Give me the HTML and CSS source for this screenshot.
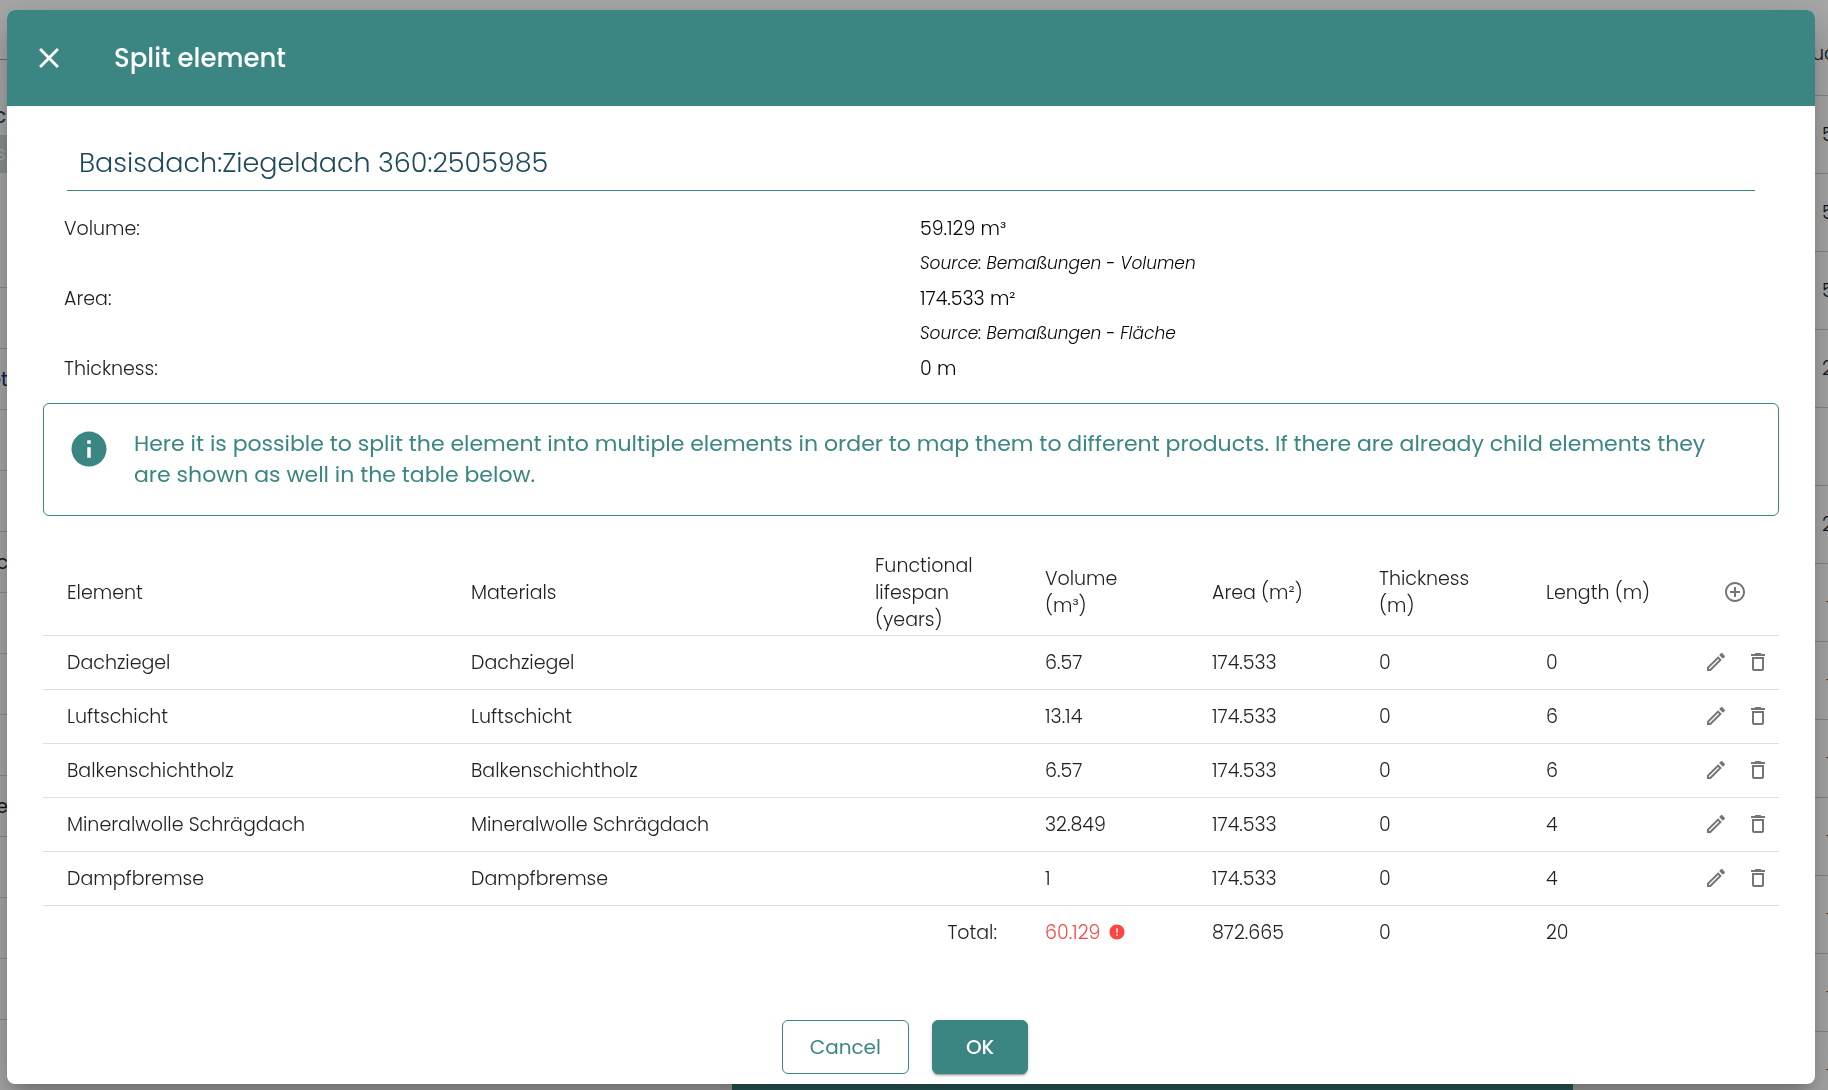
FILE: index.html
```html
<!DOCTYPE html>
<html lang="en">
<head>
<meta charset="utf-8">
<title>Split element</title>
<link rel="stylesheet" href="styles.css">
</head>
<body>
<svg class="sprite" aria-hidden="true">
  <symbol id="i-edit" viewBox="0 0 24 24"><path d="M14.06 9.02l.92.92L5.92 19H5v-.92l9.06-9.06M17.66 3c-.25 0-.51.1-.7.29l-1.83 1.83 3.75 3.75 1.83-1.83c.39-.39.39-1.02 0-1.41l-2.34-2.34c-.2-.2-.45-.29-.71-.29zm-3.6 3.19L3 17.25V21h3.75L17.81 9.94l-3.75-3.75z"/></symbol>
  <symbol id="i-delete" viewBox="0 0 24 24"><path d="M14.500 3h-5l-1 1H5v2h14V4h-3.500zM6 7v12c0 1.100.9 2 2 2h8c1.100 0 2-.9 2-2V7zM8 9h8v10H8z" fill-rule="evenodd"/></symbol>
  <symbol id="i-add" viewBox="0 0 24 24"><path d="M13 7h-2v4H7v2h4v4h2v-4h4v-2h-4V7zm-1-5C6.480 2 2 6.480 2 12s4.480 10 10 10 10-4.480 10-10S17.520 2 12 2zm0 18c-4.410 0-8-3.590-8-8s3.590-8 8-8 8 3.590 8 8-3.590 8-8 8z"/></symbol>
  <symbol id="i-close" viewBox="0 0 24 24"><path d="M19 6.410L17.590 5 12 10.590 6.410 5 5 6.410 10.590 12 5 17.590 6.410 19 12 13.410 17.590 19 19 17.590 13.410 12z"/></symbol>
  <symbol id="i-info" viewBox="0 0 24 24"><path d="M12 2C6.480 2 2 6.480 2 12s4.480 10 10 10 10-4.480 10-10S17.520 2 12 2zm1 15h-2v-6h2v6zm0-8h-2V7h2v2z"/></symbol>
  <symbol id="i-error" viewBox="0 0 24 24"><path d="M12 2C6.480 2 2 6.480 2 12s4.480 10 10 10 10-4.480 10-10S17.520 2 12 2zm1 15h-2v-2h2v2zm0-4h-2V7h2v6z"/></symbol>
</svg>

<div class="page" aria-hidden="true">
  <div class="tree">
    <div class="tree-top"></div>
    <div class="tree-head"><span class="tree-label">c</span><span class="tree-chip">s</span></div>
    <div class="tree-row"></div>
    <div class="tree-row"></div>
    <div class="tree-row link">et</div>
    <div class="tree-row"></div>
    <div class="tree-row"></div>
    <div class="tree-row">c</div>
    <div class="tree-row"></div>
    <div class="tree-row"></div>
    <div class="tree-row"></div>
    <div class="tree-row">e</div>
    <div class="tree-row"></div>
    <div class="tree-row"></div>
    <div class="tree-row"></div>
  </div>
  <div class="bottom-bar"></div>
  <div class="list">
    <div class="list-head">uct</div>
    <div class="list-row">5</div>
    <div class="list-row">5</div>
    <div class="list-row">5</div>
    <div class="list-row">2</div>
    <div class="list-row"></div>
    <div class="list-row">2</div>
    <div class="list-row dash">-</div>
    <div class="list-row dash">-</div>
    <div class="list-row dash">-</div>
    <div class="list-row dash">-</div>
    <div class="list-row dash">-</div>
    <div class="list-row dash">-</div>
    <div class="list-row dash">-</div>
  </div>
</div>

<div class="backdrop">
  <div class="dialog" role="dialog" aria-labelledby="dialog-title">
    <header class="dialog-head">
      <button class="icon-button close" type="button" aria-label="Close"><svg><use href="#i-close"/></svg></button>
      <h1 class="dialog-title" id="dialog-title">Split element</h1>
    </header>
    <main class="dialog-body">
      <h2 class="element-name">Basisdach:Ziegeldach 360:2505985</h2>
      <dl class="facts">
        <dt>Volume:</dt><dd>59.129 m³</dd>
        <dd class="source">Source: Bemaßungen - Volumen</dd>
        <dt>Area:</dt><dd>174.533 m²</dd>
        <dd class="source">Source: Bemaßungen - Fläche</dd>
        <dt>Thickness:</dt><dd>0 m</dd>
      </dl>
      <div class="notice">
        <svg class="notice-icon"><use href="#i-info"/></svg>
        <p class="notice-text">Here it is possible to split the element into multiple elements in order to map them to different products. If there are already child elements they are shown as well in the table below.</p>
      </div>
      <table class="parts">
        <colgroup>
          <col class="c-name"><col class="c-name"><col class="c-life"><col class="c-num"><col class="c-num"><col class="c-num"><col class="c-length"><col class="c-act">
        </colgroup>
        <thead>
          <tr>
            <th>Element</th><th>Materials</th><th>Functional<br>lifespan<br>(years)</th><th>Volume<br>(m³)</th><th>Area (m²)</th><th>Thickness<br>(m)</th><th>Length (m)</th>
            <th class="act"><div class="actions center"><button class="icon-button" type="button" aria-label="Add element"><svg><use href="#i-add"/></svg></button></div></th>
          </tr>
        </thead>
        <tbody>
          <tr><td>Dachziegel</td><td>Dachziegel</td><td></td><td>6.57</td><td>174.533</td><td>0</td><td>0</td><td class="act"><div class="actions"><button class="icon-button" type="button" aria-label="Edit"><svg><use href="#i-edit"/></svg></button><button class="icon-button" type="button" aria-label="Delete"><svg><use href="#i-delete"/></svg></button></div></td></tr>
          <tr><td>Luftschicht</td><td>Luftschicht</td><td></td><td>13.14</td><td>174.533</td><td>0</td><td>6</td><td class="act"><div class="actions"><button class="icon-button" type="button" aria-label="Edit"><svg><use href="#i-edit"/></svg></button><button class="icon-button" type="button" aria-label="Delete"><svg><use href="#i-delete"/></svg></button></div></td></tr>
          <tr><td>Balkenschichtholz</td><td>Balkenschichtholz</td><td></td><td>6.57</td><td>174.533</td><td>0</td><td>6</td><td class="act"><div class="actions"><button class="icon-button" type="button" aria-label="Edit"><svg><use href="#i-edit"/></svg></button><button class="icon-button" type="button" aria-label="Delete"><svg><use href="#i-delete"/></svg></button></div></td></tr>
          <tr><td>Mineralwolle Schrägdach</td><td>Mineralwolle Schrägdach</td><td></td><td>32.849</td><td>174.533</td><td>0</td><td>4</td><td class="act"><div class="actions"><button class="icon-button" type="button" aria-label="Edit"><svg><use href="#i-edit"/></svg></button><button class="icon-button" type="button" aria-label="Delete"><svg><use href="#i-delete"/></svg></button></div></td></tr>
          <tr><td>Dampfbremse</td><td>Dampfbremse</td><td></td><td>1</td><td>174.533</td><td>0</td><td>4</td><td class="act"><div class="actions"><button class="icon-button" type="button" aria-label="Edit"><svg><use href="#i-edit"/></svg></button><button class="icon-button" type="button" aria-label="Delete"><svg><use href="#i-delete"/></svg></button></div></td></tr>
        </tbody>
        <tfoot>
          <tr><td></td><td></td><td class="total">Total:</td><td class="bad"><span class="bad-value">60.129<svg class="bad-icon"><use href="#i-error"/></svg></span></td><td>872.665</td><td>0</td><td>20</td><td></td></tr>
        </tfoot>
      </table>
    </main>
    <footer class="dialog-foot">
      <button class="button outlined" type="button">Cancel</button>
      <button class="button filled" type="button">OK</button>
    </footer>
  </div>
</div>
</body>
</html>
```
FILE: styles.css
```css
* { box-sizing: border-box; }

body {
  margin: 0;
  font-family: Poppins, Inter, "Noto Sans", sans-serif;
  font-weight: 300;
  font-size: 19px;
  line-height: 27px;
  color: #212121;
}

svg { display: block; fill: currentColor; }
.sprite { position: absolute; width: 0; height: 0; }

/* Page behind the dialog */
.page {
  display: flex;
  align-items: flex-end;
  height: 100vh;
  overflow: hidden;
  background: #f8f8f8;
}
.tree, .list { align-self: flex-start; flex: none; overflow: hidden; }
.tree { width: 8px; display: flex; flex-direction: column; }
.tree-top { height: 60px; border-bottom: 1px solid #a0a0a0; }
.tree-head { height: 167px; padding-top: 42px; }
.tree-label { display: block; height: 33px; margin-left: -7px; font-size: 22px; font-weight: 400; color: #1d4a5a; }
.tree-chip { display: block; height: 38px; margin-left: -4px; background: #c9d6d6; color: #fff; line-height: 38px; }
.tree-row {
  display: flex;
  justify-content: flex-end;
  height: 61px;
  border-bottom: 1px solid #d0d0d0;
  line-height: 62px;
  font-weight: 400;
}
.tree-row.link { color: #0b2f7a; }
.bottom-bar { flex: none; width: 46%; height: 8px; margin: 0 242px 0 auto; background: #3b8683; }
.list { width: 13px; }
.list-head { height: 96px; padding-top: 40px; margin-left: -3px; border-bottom: 1px solid #c8c8c8; }
.list-row { height: 78px; padding-left: 7px; border-bottom: 1px solid #c8c8c8; line-height: 78px; }
.list-row.dash { padding-left: 11px; color: #7a3d10; }

/* Dialog */
.backdrop {
  position: fixed;
  inset: 0;
  display: flex;
  padding: 10px 13px 6px 7px;
  background: rgba(0, 0, 0, .32);
}
.dialog {
  flex: 1;
  display: flex;
  flex-direction: column;
  overflow: auto;
  border-radius: 8px;
  background: #fff;
  box-shadow: 0 11px 15px -7px rgba(0, 0, 0, .2), 0 24px 38px 3px rgba(0, 0, 0, .14), 0 9px 46px 8px rgba(0, 0, 0, .12);
}
.dialog-head {
  display: flex;
  align-items: center;
  gap: 48px;
  flex: none;
  height: 96px;
  padding: 0 25px;
  background: #3b8683;
  color: #fff;
}
.dialog-title { margin: 0; font-size: 26px; line-height: 36px; font-weight: 500; }
.dialog-body { flex: 1; padding: 32px 36px 0; }

.icon-button {
  width: 24px;
  height: 24px;
  padding: 0;
  border: 0;
  background: none;
  color: #757575;
  cursor: pointer;
}
.icon-button svg { width: 24px; height: 24px; }
.icon-button.close, .close svg { width: 34px; height: 34px; color: #fff; }

.element-name {
  margin: 0 24px;
  padding: 7px 12px 9px;
  border-bottom: 1px solid #3b8683;
  color: #1d4a5a;
  font-size: 27px;
  line-height: 36px;
  font-weight: 300;
}
.facts {
  display: grid;
  grid-template-columns: 1fr 1fr;
  grid-auto-rows: 35px;
  align-items: center;
  margin: 20px 3px 17px 21px;
}
.facts dt { grid-column: 1; }
.facts dd { grid-column: 2; margin: 0; color: #000; }
.facts .source { font-size: 17px; font-style: italic; }

.notice {
  display: flex;
  gap: 24px;
  padding: 24px 42px 25px 24px;
  border: 1px solid #3b8683;
  border-radius: 6px;
  color: #3b8683;
}
.notice-icon { flex: none; width: 42px; height: 42px; }
.notice-text { margin: 0; font-size: 22px; line-height: 31px; font-weight: 400; }

.parts {
  width: 100%;
  margin-top: 34px;
  border-collapse: collapse;
  table-layout: fixed;
}
.c-num { width: 167px; }
.c-length { width: 169px; }
.c-life { width: 170px; }
.c-act { width: 88px; }
.parts th, .parts td { height: 54px; padding: 0 0 0 24px; text-align: left; font-weight: 300; }
.parts th { height: 85px; }
.parts tr { border-bottom: 1px solid #e0e0e0; }
.parts tfoot tr { border: 0; }
.parts .act { padding: 0; }
.actions { display: flex; justify-content: flex-end; gap: 18px; padding-right: 9px; }
.actions.center { justify-content: center; padding: 0; }
.parts .total { padding: 0 24px 0 0; text-align: right; }
.parts .bad { color: #ff4444; }
.bad-value { display: flex; align-items: center; gap: 8px; }
.bad-icon { width: 18px; height: 18px; }

.dialog-foot {
  display: flex;
  justify-content: center;
  gap: 23px;
  flex: none;
  padding: 0 12px 10px 0;
}
.button {
  height: 54px;
  padding: 0 27px;
  border: 1px solid #3b8683;
  border-radius: 6px;
  font: inherit;
  font-size: 20px;
  font-weight: 400;
  cursor: pointer;
}
.outlined { background: #fff; color: #3b8683; }
.filled {
  padding: 0 33px;
  background: #3b8683;
  color: #fff;
  font-weight: 500;
  box-shadow: 0 3px 1px -2px rgba(0, 0, 0, .2), 0 2px 2px rgba(0, 0, 0, .14), 0 1px 5px rgba(0, 0, 0, .12);
}
```
